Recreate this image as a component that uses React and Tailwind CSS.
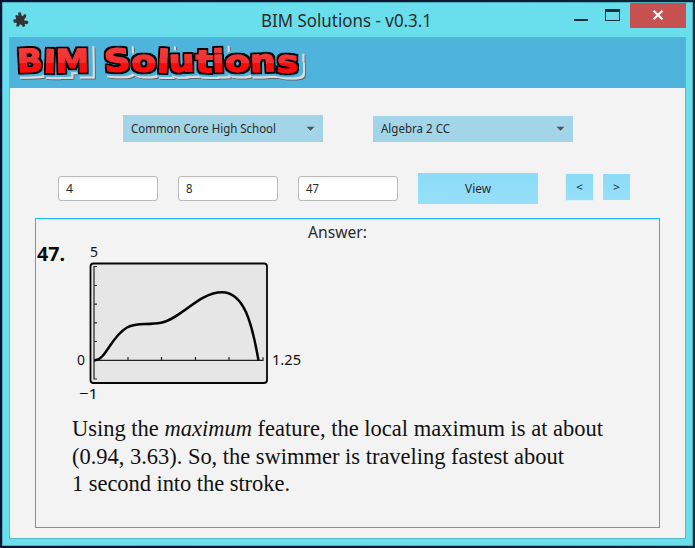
import React from "react";

const sans = "font-['Noto_Sans','Open_Sans',sans-serif]";

function Label({ children, width, size = 12, className = "", fill = "#2b2b2b" }) {
  return (
    <svg className={`block shrink-0 overflow-visible ${sans} ${className}`} width={width} height={size} aria-label={children}>
      <text x="0" y={size - 2} fontSize={size} fill={fill} textLength={width} lengthAdjust="spacingAndGlyphs">
        {children}
      </text>
    </svg>
  );
}

function PuzzleIcon() {
  return (
    <svg className="block" width="16" height="16" viewBox="0 0 16 16" fill="#333">
      <path d="M5.200.6h2.800l.4 2.900 1.600.6L11.200 2l2.200 1-.8 2.800-1.400 1.400.6 1.800 1-.6 2.200.6.3 2-1.200 1.200-1.800-.4-.6.6.6 1.600-2.200.9-1.900-2.300-1.400-.1-1 2H3.200l.6-3.600L.8 10.400.2 7.600 3.200 7.200 2.200 3.800l1.600-.7 1.600.9Z" />
    </svg>
  );
}

function Logo() {
  return (
    <svg className="block overflow-visible font-['DejaVu_Sans',sans-serif] font-bold" width="310" height="50" strokeLinejoin="round">
      <defs>
        <linearGradient id="red" gradientUnits="userSpaceOnUse" x1="0" y1="9" x2="0" y2="35">
          <stop offset="0" stopColor="#f33b3b" />
          <stop offset=".6" stopColor="#f23030" />
          <stop offset=".62" stopColor="#f51212" />
          <stop offset="1" stopColor="#f80808" />
        </linearGradient>
        <filter id="relief" filterUnits="userSpaceOnUse" x="0" y="0" width="310" height="50">
          <feMorphology in="SourceAlpha" operator="dilate" radius="2" result="edge" />
          <feMorphology in="SourceAlpha" operator="dilate" radius="4" result="halo" />
          <feGaussianBlur in="halo" stdDeviation=".7" result="soft" />
          <feOffset in="soft" dx="5" dy="2.500" result="o1" />
          <feFlood floodColor="#5c6468" />
          <feComposite in2="o1" operator="in" result="shade" />
          <feOffset in="halo" dx="3.500" dy="2" result="o2" />
          <feFlood floodColor="#d9dddf" />
          <feComposite in2="o2" operator="in" result="light" />
          <feOffset in="halo" dx="1.500" dy="0" result="o3" />
          <feFlood floodColor="#4fb4db" />
          <feComposite in2="o3" operator="in" result="gap" />
          <feFlood floodColor="#000" />
          <feComposite in2="edge" operator="in" result="outline" />
          <feMerge>
            <feMergeNode in="shade" />
            <feMergeNode in="light" />
            <feMergeNode in="gap" />
            <feMergeNode in="outline" />
            <feMergeNode in="SourceGraphic" />
          </feMerge>
        </filter>
      </defs>
      <g filter="url(#relief)" fill="url(#red)" stroke="url(#red)" strokeWidth="1">
        <text x="7.500" y="34.500" fontSize="32" textLength="72" lengthAdjust="spacingAndGlyphs" rotate="-3 2 -1">BIM</text>
        <text x="95" y="34" fontSize="31" textLength="193" lengthAdjust="spacingAndGlyphs" rotate="-4 0 3 -2 2 -2 0 -2 3">Solutions</text>
      </g>
    </svg>
  );
}

function Select({ label, width, className }) {
  return (
    <div className={`flex w-[200px] items-center justify-between bg-[#a2d5e8] pr-2 pl-2 ${className}`}>
      <Label width={width}>{label}</Label>
      <svg className="block" width="9" height="6" viewBox="0 0 9 6">
        <path d="M1 2h7L4.5 6Z" fill="#d3eaf3" />
        <path d="M.5.8h8L4.500 5Z" fill="#4f5558" />
      </svg>
    </div>
  );
}

function Field({ value, width }) {
  return (
    <div className="mr-5 flex h-[25px] w-[100px] items-center rounded-[3px] border border-[#bababa] bg-linear-to-b from-[#f4f4f4] to-white to-20% pl-[7px]">
      <Label width={width}>{value}</Label>
    </div>
  );
}

function Graph() {
  return (
    <svg className={`block ${sans}`} width="300" height="160" viewBox="36 242 300 160">
      <text x="37" y="261" fontSize="19" fontWeight="700" fill="#0a0a0a" textLength="28" lengthAdjust="spacingAndGlyphs">47.</text>
      <g fontSize="15" fill="#111">
        <text x="90" y="257" textLength="8" lengthAdjust="spacingAndGlyphs">5</text>
        <text x="77" y="365" textLength="8" lengthAdjust="spacingAndGlyphs">0</text>
        <text x="272" y="365" textLength="29" lengthAdjust="spacingAndGlyphs">1.25</text>
        <text x="79" y="399" textLength="19" lengthAdjust="spacingAndGlyphs">−1</text>
      </g>
      <rect x="90.5" y="263.5" width="176.5" height="119.5" rx="3" fill="#e6e6e6" stroke="#050505" strokeWidth="1.8" />
      <path
        d="M97 266.5h-3V379h3M94 285.5h3M94 304.2h3M94 322.8h3M94 341.5h3M94 360.3h169v-3M128 360v-3M161.5 360v-3M195.5 360v-3M229 360v-3"
        fill="none" stroke="#222" strokeWidth="1.2"
      />
      <path
        d="M94 360.500c12 0 16-23 33-33 10-5.500 20-2 34-4.700 20-4 38-30.600 61-30.600 22 0 30 31 36.500 68.300"
        fill="none" stroke="#050505" strokeWidth="2.5"
      />
    </svg>
  );
}

function Paragraph() {
  return (
    <svg className="ml-9 block overflow-visible font-['Liberation_Serif',serif]" width="540" height="90" fontSize="22.500" fill="#111">
      <text x="0" y="34" textLength="531">
        Using the <tspan fontStyle="italic">maximum</tspan> feature, the local maximum is at about
      </text>
      <text x="0" y="62" textLength="492">(0.94, 3.63). So, the swimmer is traveling fastest about</text>
      <text x="0" y="89" textLength="218">1 second into the stroke.</text>
    </svg>
  );
}

export default function App() {
  return (
    <div className="h-[548px] w-[695px] overflow-hidden bg-linear-to-r from-[#071332] via-[#10152e] to-[#0c2638] pt-[2px] pl-[2px]">
      <div className="flex h-[544px] w-[691px] flex-col border border-[#4cb0bd] bg-[#69dfed] px-[6px] pb-[6px]">
        <header className="flex h-[34px] shrink-0 items-start">
          <div className="mt-[9px] ml-[4px] w-[248px]"><PuzzleIcon /></div>
          <Label width={171} size={18} className="mt-[8px]">BIM Solutions - v0.3.1</Label>
          <div className="mt-[16px] ml-[142px] h-[2px] w-[14px] bg-[#222d2f]" />
          <div className="mt-[6px] ml-[17px] h-[12px] w-[15px] border border-t-[3px] border-[#222d2f]" />
          <div className="ml-[10px] flex h-[25px] w-[56px] items-center justify-center bg-[#c75050]">
            <svg className="-mt-[2px] -ml-px block" width="12" height="10" viewBox="0 0 12 10" stroke="#fff" strokeWidth="2.200"><path d="m1.500.8 9 8.400m0-8.400-9 8.400" /></svg>
          </div>
        </header>
        <main className="flex min-h-0 w-[677px] flex-1 flex-col border border-[#57b9c8] bg-[#f3f3f3]">
          <div className="h-[50px] shrink-0 bg-[#4fb4db]"><Logo /></div>
          <div className="mt-[27px] ml-[113px] flex h-[27px] shrink-0 gap-[50px]">
            <Select label="Common Core High School" width={145} className="h-[27px]" />
            <Select label="Algebra 2 CC" width={69} className="mt-px h-[26px]" />
          </div>
          <div className="mt-[31px] ml-[48px] flex h-[31px] shrink-0 items-start">
            <div className="mt-[3px] flex">
              <Field value="4" width={7} />
              <Field value="8" width={6.5} />
              <Field value="47" width={13} />
            </div>
            <div className="flex h-[31px] w-[120px] items-center justify-center bg-linear-to-b from-[#8bdcf8] to-[#97dff9]"><Label width={26}>View</Label></div>
            <div className="mt-px ml-[28px] flex h-[26px] w-[27px] items-center justify-center bg-linear-to-b from-[#8bdcf8] to-[#97dff9] outline outline-[#dff1f8]"><Label width={7} size={11}>&lt;</Label></div>
            <div className="mt-px ml-[10px] flex h-[26px] w-[27px] items-center justify-center bg-linear-to-b from-[#8bdcf8] to-[#97dff9]"><Label width={7} size={11}>&gt;</Label></div>
          </div>
          <section className="mt-[14px] ml-[25px] flex h-[310px] w-[625px] shrink-0 flex-col border border-[#18b7f2]">
            <div className="flex h-[23px] justify-center pt-[4px] pr-[20px]"><Label width={59} size={17}>Answer:</Label></div>
            <Graph />
            <Paragraph />
          </section>
        </main>
      </div>
    </div>
  );
}
